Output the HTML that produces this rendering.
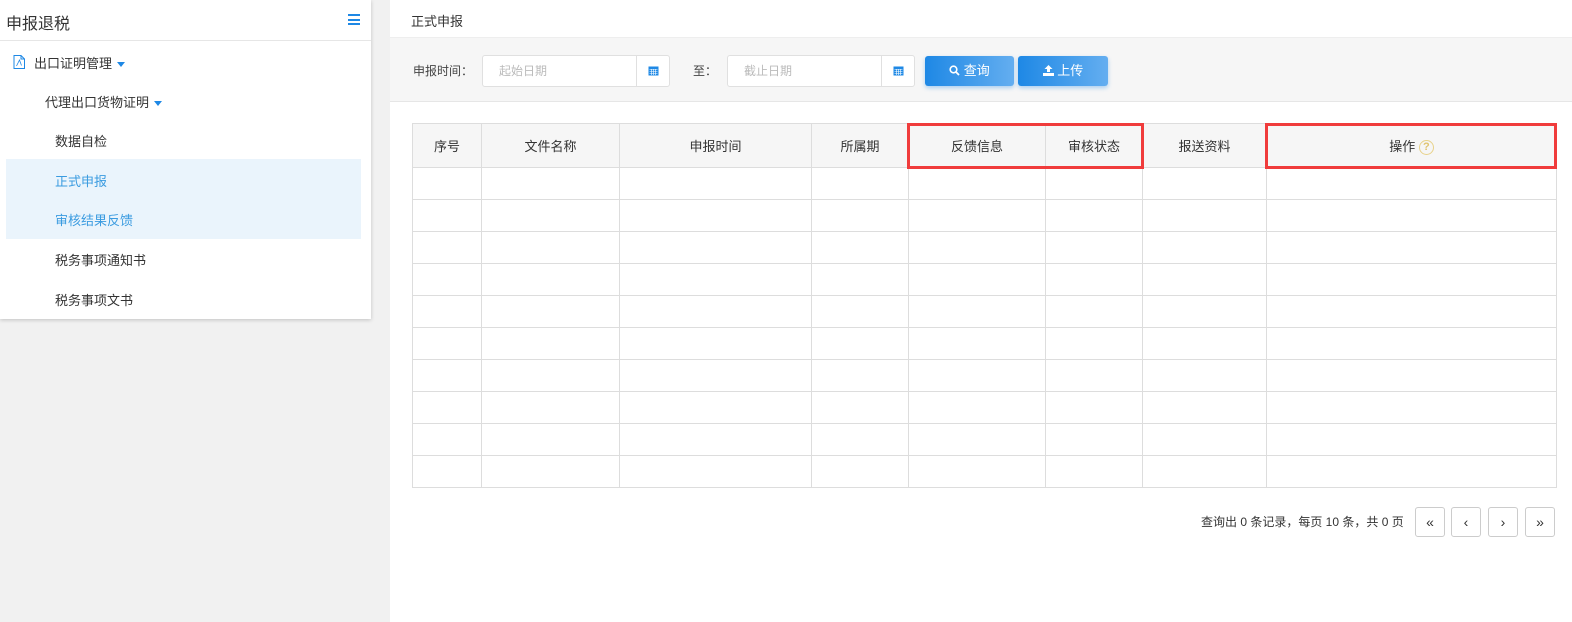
<!DOCTYPE html>
<html><head><meta charset="utf-8"><style>
*{box-sizing:border-box;margin:0;padding:0}
body{width:1572px;height:622px;background:#f1f1f1;font-family:"Liberation Sans","Noto Sans CJK SC",sans-serif;font-size:13px;color:#333;position:relative;overflow:hidden}
.abs{position:absolute}
.side{left:0;top:0;width:371px;height:319px;background:#fff;box-shadow:0 1px 4px rgba(0,0,0,.2)}
.side .t{left:6px;top:10px;font-size:16px;color:#333}
.side .it{font-size:13px;color:#333;white-space:nowrap}
.car{display:inline-block;width:0;height:0;border-left:4px solid transparent;border-right:4px solid transparent;border-top:5px solid #1e88e5;margin-left:5px;vertical-align:middle}
.main{left:390px;top:0;width:1182px;height:622px;background:#fff}
.filter{left:0;top:37px;width:1182px;height:65px;background:#f6f6f6;border-top:1px solid #eee;border-bottom:1px solid #e6e6e6}
.inp{height:32px;background:#fff;border:1px solid #e0e0e0;border-radius:3px;color:#bbb;font-size:12px;line-height:30px;padding-left:16px}
.inp .cal{position:absolute;right:0;top:0;width:33px;height:30px;border-left:1px solid #e0e0e0}
.btn{height:30px;border-radius:3px;background:linear-gradient(90deg,#1e88e5,#64aef0);color:#fff;font-size:13px;text-align:center;line-height:30px;box-shadow:0 2px 4px rgba(30,136,229,.35)}
table{position:absolute;left:22px;top:123px;width:1144px;border-collapse:collapse;table-layout:fixed}
td,th{border:1px solid #ddd;height:32px}
th{height:44px;background:#f6f6f6;font-weight:normal;font-size:13px;color:#333}
.pg{width:30px;height:30px;border:1px solid #ccc;border-radius:3px;background:#fff;text-align:center;line-height:28px;font-size:14px;color:#333}
</style></head><body>
<div class="abs side">
<div class="abs t">申报退税</div>
<div class="abs" style="left:348px;top:14px;width:12px;height:11px;">
<div style="height:2px;background:#1e88e5;margin-bottom:2.5px"></div><div style="height:2px;background:#1e88e5;margin-bottom:2.5px"></div><div style="height:2px;background:#1e88e5"></div></div>
<div class="abs" style="left:0;top:40px;width:371px;height:1px;background:#e6e6e6"></div>
<svg class="abs" style="left:13px;top:55px" width="12" height="14" viewBox="0 0 12 14"><path d="M1 .5h7l3.5 3.5v9.5h-10.5z M8 .5v3.5h3.5" fill="none" stroke="#1e88e5"/><path d="M3.5 11l3-6 2 5.5" fill="none" stroke="#1e88e5" stroke-width=".8"/></svg>
<div class="abs it" style="left:34px;top:53px">出口证明管理<span class="car"></span></div>
<div class="abs it" style="left:45px;top:92px">代理出口货物证明<span class="car"></span></div>
<div class="abs it" style="left:55px;top:131px">数据自检</div>
<div class="abs" style="left:6px;top:159px;width:355px;height:80px;background:#eaf4fc"></div>
<div class="abs it" style="left:55px;top:171px;color:#3a9be0">正式申报</div>
<div class="abs it" style="left:55px;top:210px;color:#3a9be0">审核结果反馈</div>
<div class="abs it" style="left:55px;top:250px">税务事项通知书</div>
<div class="abs it" style="left:55px;top:290px">税务事项文书</div>
</div>
<div class="abs main">
<div class="abs" style="left:21px;top:11px;font-size:13px;color:#333">正式申报</div>
<div class="abs filter">
<div class="abs" style="left:23px;top:24px;font-size:12px;color:#444">申报时间：</div>
<div class="abs inp" style="left:92px;top:17px;width:188px">起始日期<div class="cal"><svg style="margin:9px 0 0 11px" width="11" height="11" viewBox="0 0 11 11"><rect x=".5" y="1.5" width="10" height="9" fill="#1e88e5"/><path d="M1.5 4.5h8M1.5 6.5h8M1.5 8.5h8M3.5 4v6M5.5 4v6M7.5 4v6" stroke="#fff" stroke-width=".6"/></svg></div></div>
<div class="abs" style="left:303px;top:24px;font-size:12px;color:#444">至：</div>
<div class="abs inp" style="left:337px;top:17px;width:188px">截止日期<div class="cal"><svg style="margin:9px 0 0 11px" width="11" height="11" viewBox="0 0 11 11"><rect x=".5" y="1.5" width="10" height="9" fill="#1e88e5"/><path d="M1.5 4.5h8M1.5 6.5h8M1.5 8.5h8M3.5 4v6M5.5 4v6M7.5 4v6" stroke="#fff" stroke-width=".6"/></svg></div></div>
<div class="abs btn" style="left:535px;top:18px;width:89px"><svg width="11" height="11" viewBox="0 0 11 11" style="vertical-align:-1px"><circle cx="4.5" cy="4.5" r="3.3" fill="none" stroke="#fff" stroke-width="1.6"/><path d="M7 7l3 3" stroke="#fff" stroke-width="1.8"/></svg> 查询</div>
<div class="abs btn" style="left:628px;top:18px;width:90px"><svg width="11" height="11" viewBox="0 0 11 11" style="vertical-align:-1px"><path d="M5.5 0l4 4h-2.5v3h-3v-3h-2.5z M0 8h11v3h-11z" fill="#fff"/></svg> 上传</div>
</div>
<table>
<colgroup><col style="width:69px"><col style="width:138px"><col style="width:192px"><col style="width:97px"><col style="width:137px"><col style="width:97px"><col style="width:124px"><col style="width:290px"></colgroup>
<tr><th>序号</th><th>文件名称</th><th>申报时间</th><th>所属期</th><th>反馈信息</th><th>审核状态</th><th>报送资料</th><th>操作 <span style="display:inline-block;width:15px;height:15px;border:1.5px solid #e8d28a;border-radius:50%;color:#e0c470;font-size:11px;line-height:12px;vertical-align:middle;font-weight:bold">?</span></th></tr>
<tr><td></td><td></td><td></td><td></td><td></td><td></td><td></td><td></td></tr>
<tr><td></td><td></td><td></td><td></td><td></td><td></td><td></td><td></td></tr>
<tr><td></td><td></td><td></td><td></td><td></td><td></td><td></td><td></td></tr>
<tr><td></td><td></td><td></td><td></td><td></td><td></td><td></td><td></td></tr>
<tr><td></td><td></td><td></td><td></td><td></td><td></td><td></td><td></td></tr>
<tr><td></td><td></td><td></td><td></td><td></td><td></td><td></td><td></td></tr>
<tr><td></td><td></td><td></td><td></td><td></td><td></td><td></td><td></td></tr>
<tr><td></td><td></td><td></td><td></td><td></td><td></td><td></td><td></td></tr>
<tr><td></td><td></td><td></td><td></td><td></td><td></td><td></td><td></td></tr>
<tr><td></td><td></td><td></td><td></td><td></td><td></td><td></td><td></td></tr>
</table>
<div class="abs" style="left:517px;top:123px;width:237px;height:46px;border:3px solid #f03c3c"></div>
<div class="abs" style="left:875px;top:123px;width:292px;height:46px;border:3px solid #f03c3c"></div>
<div class="abs" style="left:811px;top:513px;font-size:12px;color:#333">查询出 0 条记录，每页 10 条，共 0 页</div>
<div class="abs pg" style="left:1025px;top:507px">«</div>
<div class="abs pg" style="left:1061px;top:507px">‹</div>
<div class="abs pg" style="left:1098px;top:507px">›</div>
<div class="abs pg" style="left:1135px;top:507px">»</div>
</div>
</body></html>
